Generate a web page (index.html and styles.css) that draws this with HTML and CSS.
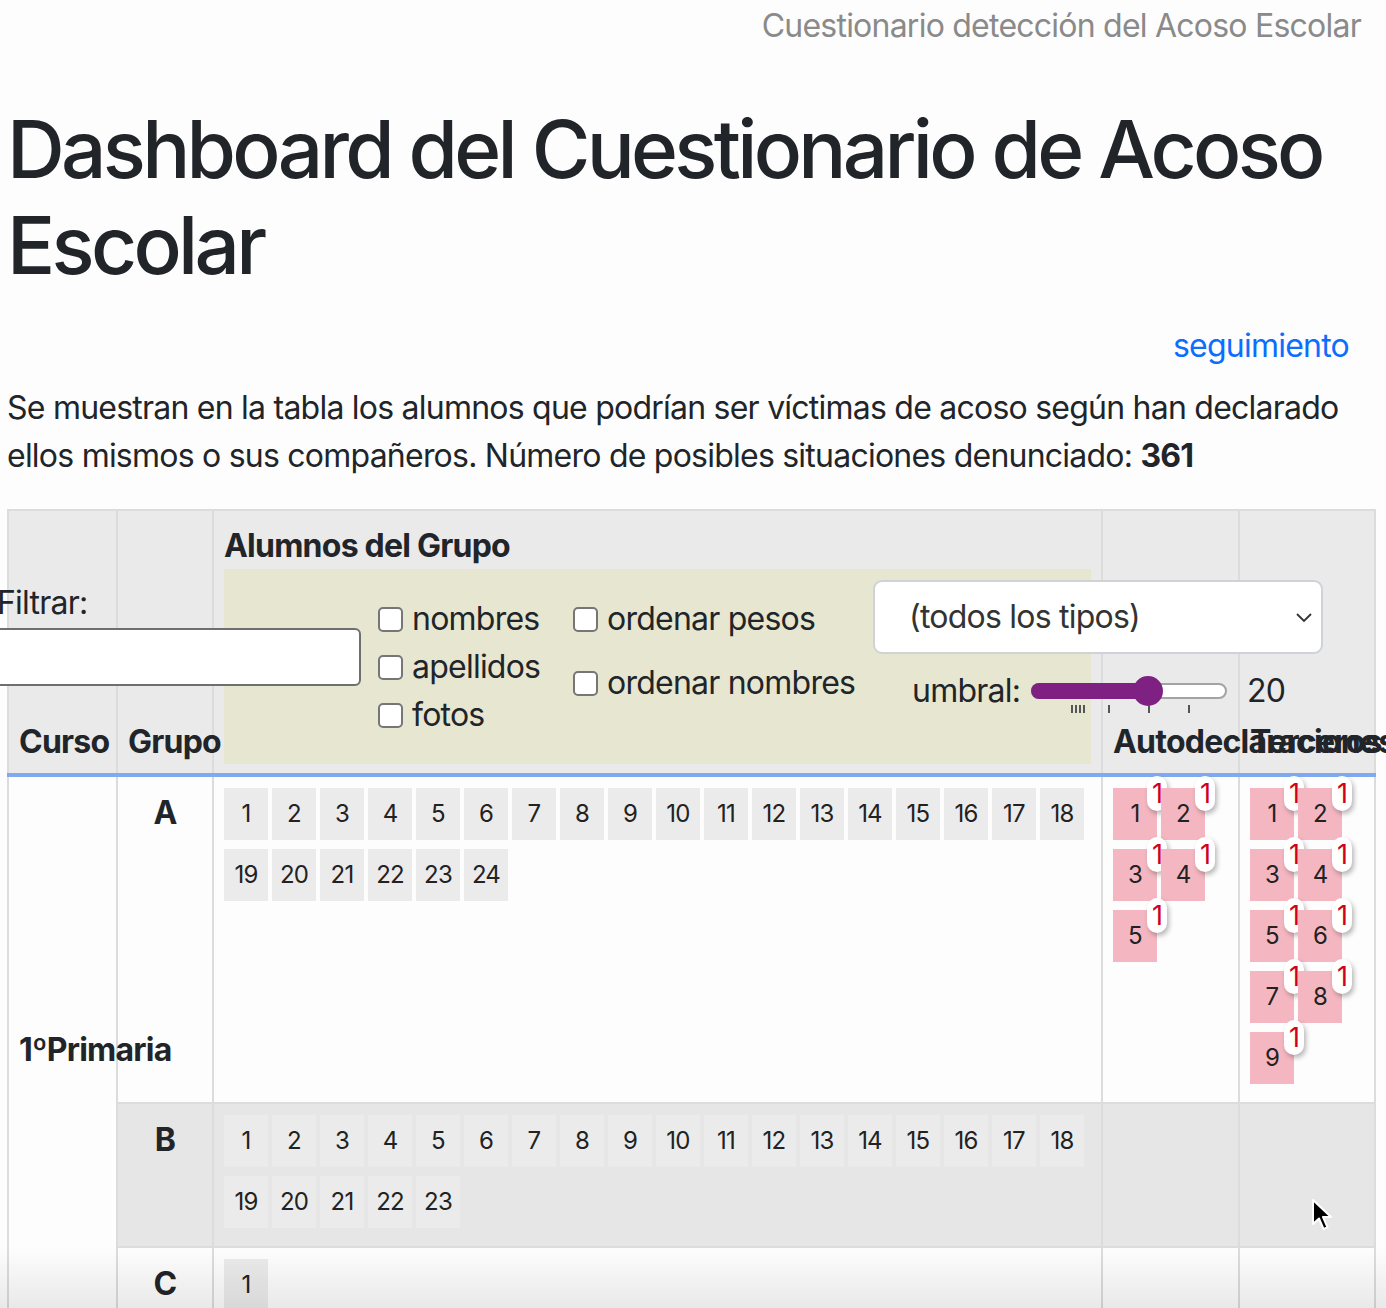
FILE: index.html
```html
<!DOCTYPE html>
<html lang="es">
<head>
<meta charset="utf-8">
<title>Dashboard del Cuestionario de Acoso Escolar</title>
<link rel="stylesheet" href="styles.css">
</head>
<body>
<header class="topbar"><span class="brand">Cuestionario detección del Acoso Escolar</span></header>
<main class="page">
  <h1 class="title">Dashboard del Cuestionario de Acoso Escolar</h1>
  <div class="links"><a href="#" class="link">seguimiento</a></div>
  <p class="intro">Se muestran en la tabla los alumnos que podrían ser víctimas de acoso según han declarado ellos mismos o sus compañeros. Número de posibles situaciones denunciado: <strong>361</strong></p>

  <table class="dash">
    <colgroup>
      <col class="c-curso"><col class="c-grupo"><col class="c-alumnos"><col class="c-auto"><col class="c-terc">
    </colgroup>
    <thead>
      <tr>
        <th class="h-curso">Curso</th>
        <th class="h-grupo">Grupo</th>
        <th class="h-alumnos">
          <div class="h-title">Alumnos del Grupo</div>
          <div class="controls">
            <label class="filter-label">Filtrar:</label>
            <input class="filter-input" type="text">
            <div class="checks checks-1">
              <label class="check"><input type="checkbox" class="cb">nombres</label>
              <label class="check"><input type="checkbox" class="cb">apellidos</label>
              <label class="check"><input type="checkbox" class="cb">fotos</label>
            </div>
            <div class="checks checks-2">
              <label class="check"><input type="checkbox" class="cb">ordenar pesos</label>
              <label class="check"><input type="checkbox" class="cb">ordenar nombres</label>
            </div>
            <div class="tipo">
              <div class="select">
                <span class="select-text">(todos los tipos)</span>
                <svg class="chev" width="18" height="12" viewBox="0 0 18 12"><path d="M2 3 L9 10 L16 3" fill="none" stroke="#333" stroke-width="1.8"/></svg>
              </div>
              <div class="umbral">
                <span class="umbral-label">umbral:</span>
                <div class="range">
                  <div class="track"></div>
                  <div class="fill"></div>
                  <div class="thumb"></div>
                  <span class="tick t1"></span><span class="tick t2"></span><span class="tick t3"></span><span class="tick t4"></span>
                  <span class="tick t5"></span><span class="tick t6"></span><span class="tick t7"></span>
                </div>
                <span class="umbral-val">20</span>
              </div>
            </div>
          </div>
        </th>
        <th class="h-auto"><span class="over">Autodeclaraciones</span></th>
        <th class="h-terc"><span class="over">Terceros</span></th>
      </tr>
    </thead>
    <tbody>
      <tr class="row-a">
        <td class="curso" rowspan="3">1ºPrimaria</td>
        <td class="grupo">A</td>
        <td class="alumnos">
          <div class="boxes">
            <span class="box">1</span><span class="box">2</span><span class="box">3</span><span class="box">4</span><span class="box">5</span><span class="box">6</span><span class="box">7</span><span class="box">8</span><span class="box">9</span><span class="box">10</span><span class="box">11</span><span class="box">12</span><span class="box">13</span><span class="box">14</span><span class="box">15</span><span class="box">16</span><span class="box">17</span><span class="box">18</span><span class="box">19</span><span class="box">20</span><span class="box">21</span><span class="box">22</span><span class="box">23</span><span class="box">24</span>
          </div>
        </td>
        <td class="pcell">
          <div class="pinks">
            <span class="pbox">1<span class="badge">1</span></span><span class="pbox">2<span class="badge">1</span></span><span class="pbox">3<span class="badge">1</span></span><span class="pbox">4<span class="badge">1</span></span><span class="pbox">5<span class="badge">1</span></span>
          </div>
        </td>
        <td class="pcell">
          <div class="pinks">
            <span class="pbox">1<span class="badge">1</span></span><span class="pbox">2<span class="badge">1</span></span><span class="pbox">3<span class="badge">1</span></span><span class="pbox">4<span class="badge">1</span></span><span class="pbox">5<span class="badge">1</span></span><span class="pbox">6<span class="badge">1</span></span><span class="pbox">7<span class="badge">1</span></span><span class="pbox">8<span class="badge">1</span></span><span class="pbox">9<span class="badge">1</span></span>
          </div>
        </td>
      </tr>
      <tr class="row-b">
        <td class="grupo">B</td>
        <td class="alumnos">
          <div class="boxes">
            <span class="box">1</span><span class="box">2</span><span class="box">3</span><span class="box">4</span><span class="box">5</span><span class="box">6</span><span class="box">7</span><span class="box">8</span><span class="box">9</span><span class="box">10</span><span class="box">11</span><span class="box">12</span><span class="box">13</span><span class="box">14</span><span class="box">15</span><span class="box">16</span><span class="box">17</span><span class="box">18</span><span class="box">19</span><span class="box">20</span><span class="box">21</span><span class="box">22</span><span class="box">23</span>
          </div>
        </td>
        <td class="pcell"></td>
        <td class="pcell"></td>
      </tr>
      <tr class="row-c">
        <td class="grupo">C</td>
        <td class="alumnos">
          <div class="boxes"><span class="box">1</span></div>
        </td>
        <td class="pcell"></td>
        <td class="pcell"></td>
      </tr>
    </tbody>
  </table>
</main>
<div class="fade"></div>
<svg class="cursor" width="24" height="34" viewBox="0 0 24 34"><path d="M2 2 L2 26 L8 20.5 L12.5 31 L16.5 29.3 L12 19 L20 19 Z" fill="#000" stroke="#fff" stroke-width="2" stroke-linejoin="round"/></svg>
</body>
</html>
```
FILE: styles.css
```css
html, body {
  margin: 0;
  padding: 0;
}
body {
  font-family: Inter, "Liberation Sans", "DejaVu Sans", sans-serif;
  font-size: 32px;
  line-height: 1.5;
  letter-spacing: -0.024em;
  color: #212529;
  background: #fdfdfd;
  overflow: hidden;
}

.topbar {
  display: flex;
  justify-content: flex-end;
  padding: 2px 25px 0 0;
  height: 58px;
}
.brand {
  color: #8a8a8a;
  font-size: 32px;
  line-height: 48px;
}

.page {
  padding: 0 8px 0 7px;
}
.title {
  margin: 41px 0 29px;
  font-size: 80px;
  line-height: 96px;
  font-weight: 500;
  letter-spacing: -3.7px;
  color: #212529;
}
.links {
  text-align: right;
  padding-right: 29px;
  margin-bottom: 14px;
}
.link {
  color: #0d6efd;
  text-decoration: none;
}
.intro {
  margin: 0 0 29px;
}

/* table */
.dash {
  border-collapse: collapse;
  table-layout: fixed;
  width: 1367px;
}
.c-curso { width: 109px; }
.c-grupo { width: 96px; }
.c-alumnos { width: 889px; }
.c-auto { width: 137px; }
.c-terc { width: 136px; }

.dash th, .dash td {
  border: 2px solid #dcdcdc;
}
.dash th {
  background: #eaeaea;
  text-align: left;
  vertical-align: bottom;
  font-weight: 700;
  line-height: 36px;
  padding: 10px 10px 13px;
  border-bottom: 4px solid #7fa9f0;
  white-space: nowrap;
}
.dash th.h-alumnos {
  padding: 17px 10px 9px;
}
.h-title {
  margin-bottom: 5px;
}
.over {
  white-space: nowrap;
}

.controls {
  position: relative;
  z-index: 1;
  display: flex;
  align-items: flex-start;
  height: 195px;
  box-sizing: border-box;
  padding: 11px 0 0 154px;
  background: #e7e6d0;
  font-weight: 400;
  line-height: 48px;
}
.filter-label {
  position: absolute;
  left: -227px;
  top: 10px;
}
.filter-input {
  position: absolute;
  left: -233px;
  top: 59px;
  width: 370px;
  height: 58px;
  box-sizing: border-box;
  margin: 0;
  border: 2px solid #6f6f6f;
  border-radius: 6px;
  background: #fff;
}
.checks {
  display: flex;
  flex-direction: column;
  flex-shrink: 0;
  margin-top: 15px;
}
.checks-1 { width: 195px; }
.checks-2 { width: 300px; gap: 16px; }
.check {
  display: flex;
  align-items: center;
  white-space: nowrap;
}
.cb {
  appearance: none;
  -webkit-appearance: none;
  width: 25px;
  height: 25px;
  margin: 0 9px 0 0;
  border: 2px solid #767676;
  border-radius: 5px;
  background: #fff;
  flex-shrink: 0;
}
.tipo {
  flex-shrink: 0;
  width: 450px;
}
.select {
  display: flex;
  align-items: center;
  justify-content: space-between;
  height: 74px;
  box-sizing: border-box;
  padding: 0 8px 0 34px;
  border: 2px solid #cfd2d6;
  border-radius: 9px;
  background: #fff;
  color: #333;
}
.umbral {
  display: flex;
  align-items: center;
  margin-top: 13px;
  padding-left: 39px;
  color: #212529;
}
.umbral-label {
  width: 108px;
  flex-shrink: 0;
}
.range {
  position: relative;
  flex-shrink: 0;
  width: 196px;
  height: 48px;
  margin-left: 11px;
}
.track {
  position: absolute;
  left: 0;
  right: 0;
  top: 16px;
  height: 16px;
  box-sizing: border-box;
  border: 2px solid #a3a3a3;
  border-radius: 8px;
  background: #fff;
}
.fill {
  position: absolute;
  left: 0;
  top: 16px;
  width: 120px;
  height: 16px;
  border-radius: 8px;
  background: #7f2183;
}
.thumb {
  position: absolute;
  left: 102px;
  top: 9px;
  width: 30px;
  height: 30px;
  border-radius: 50%;
  background: #7f2183;
}
.tick {
  position: absolute;
  top: 38px;
  width: 2px;
  height: 8px;
  background: #555;
}
.t1 { left: 40px; }
.t2 { left: 44px; }
.t3 { left: 48px; }
.t4 { left: 52px; }
.t5 { left: 77px; }
.t6 { left: 117px; }
.t7 { left: 157px; }
.umbral-val {
  margin-left: 20px;
}

/* body rows */
.dash td {
  vertical-align: top;
  padding: 11px 10px 18px;
}
.row-a td { background: #fdfdfd; }
.row-b td { background: #e6e6e6; }
.row-c td { background: #fdfdfd; }
.dash td.curso {
  background: #fdfdfd;
  vertical-align: middle;
  font-weight: 700;
  white-space: nowrap;
  line-height: 36px;
}
.dash td.grupo {
  text-align: center;
  font-weight: 700;
  line-height: 50px;
}
.boxes, .pinks {
  display: flex;
  flex-wrap: wrap;
  gap: 9px 4px;
}
.box, .pbox {
  display: flex;
  align-items: center;
  justify-content: center;
  width: 44px;
  height: 52px;
  font-size: 24px;
  line-height: 1;
  color: #222;
  background: #ebebeb;
}
.pbox {
  position: relative;
  background: #f4b7c1;
}
.badge {
  position: absolute;
  top: -12px;
  right: -10px;
  width: 20px;
  height: 35px;
  border-radius: 10px;
  background: #fff;
  color: #d0021b;
  font-size: 27px;
  display: flex;
  align-items: center;
  justify-content: center;
  box-shadow: 2px 3px 5px rgba(0, 0, 0, 0.28);
}

.fade {
  position: fixed;
  left: 0;
  right: 0;
  bottom: 0;
  height: 60px;
  background: linear-gradient(to bottom, rgba(0, 0, 0, 0), rgba(0, 0, 0, 0.08));
  pointer-events: none;
  z-index: 5;
}
.cursor {
  position: fixed;
  left: 1311px;
  top: 1198px;
  z-index: 6;
}
```
